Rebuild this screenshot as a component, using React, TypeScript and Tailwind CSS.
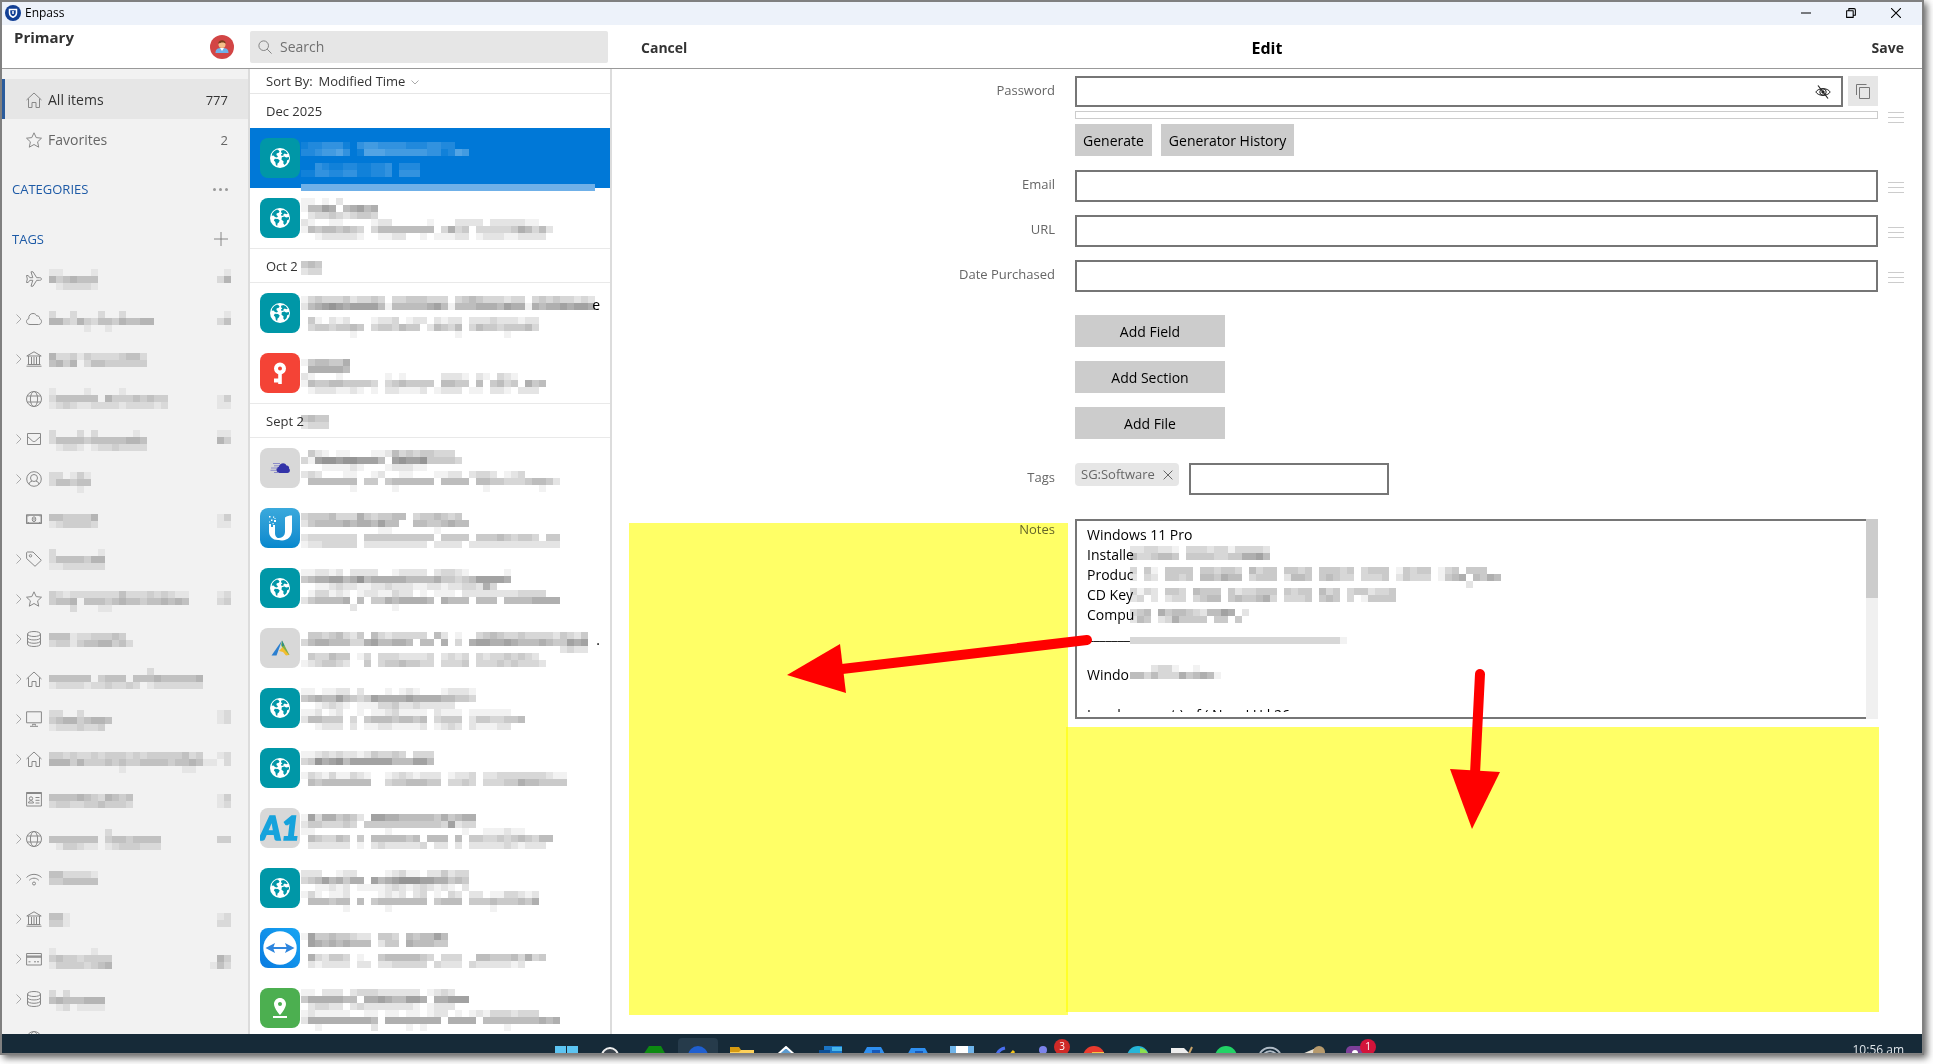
import React from "react";
import { MdPinDrop } from "react-icons/md";

type Block = [row: number, col: number, cells: string[]];

/* A redaction layer: every digit is one 7px cell, its value the darkness. */
function Mosaic({ blocks, step = 0.052, fill = "#000" }: { blocks: Block[]; step?: number; fill?: string }) {
  return (
    <svg aria-hidden="true" className="block overflow-visible" width="1" height="1" shapeRendering="crispEdges">
      {blocks.map(([row, col, lines]) =>
        lines.map((line, r) =>
          line.split("").map((c, i) =>
            c === "0" || c === "." ? null : (
              <rect
                key={`${row}-${col}-${r}-${i}`}
                x={(col + i) * 7}
                y={(row + r) * 7}
                width="7"
                height="7"
                fill={fill}
                fillOpacity={Number(c) * step}
              />
            )
          )
        )
      )}
    </svg>
  );
}

const tagBlocks: Block[] = [
  [0, 0, ["1100001", "5345444", ".122221"]],
  [0, 24, [".1", "25", ".."]],
  [6, 0, ["200200020020", "553253244354455", ".....1..1"]],
  [6, 24, [".1", "24"]],
  [12, 0, ["52231322223442", "45350244333333"]],
  [17, 0, ["1....1....1", "24444440533343433", "12321122221222212"]],
  [17, 25, [".", "3", "1"]],
  [17, 24, [".", "1", "1"]],
  [23, 0, ["2...2.2.....1.", "24444344444554", ".1221.12232222"]],
  [23, 24, ["11", "53"]],
  [29, 0, ["220131", "244344", "....1"]],
  [35, 0, ["4433335", "1233332"]],
  [35, 24, ["13", "11"]],
  [40, 0, ["2......1", "24444355", "11222222"]],
  [46, 0, ["32122222224222323211", "34450444345443445454", "...2...11"]],
  [46, 24, ["12", "23"]],
  [52, 0, ["44412233343", "233134455342"]],
  [57, 0, ["..............2", "4444440344404445444445", "1222212232232012222222"]],
  [63, 0, ["22..2.", "345534554", "12223223"]],
  [63, 24, ["12", "12"]],
  [69, 0, ["3323223233323233333423", "5553533343433444434454", "..........1........11."]],
  [69, 22, ["..12", "11.2"]],
  [75, 0, ["444454325434", "233223343332"]],
  [75, 24, ["13", "12"]],
  [80, 0, ["........2", "4444444.34434444", ".133211.12333222"]],
  [80, 24, ["..", "33"]],
  [86, 0, ["4422221", "3344444"]],
  [92, 0, ["441", "331"]],
  [92, 24, ["12", "22"]],
  [97, 0, ["1.....1", "343323333", "133332345"]],
  [98, 23, [".53", "142"]],
  [103, 0, ["2.2.....", "45444555", ".12.1111"]],
];

const selectedBlocks: Block[] = [
  [0, 0, ["122333103443333222332200", "223445301555444444331254"]],
  [3, 0, ["00321122112230222", "11332233112230333"]],
];

const listBlocks: Block[] = [
  [8, 0, ["1101.2", "15576056756", ".2334323443"]],
  [11, 0, ["210011000012200000100.2222.2222211", "1545545430355555555.3634.33333465352", "..1222221..1122..1.11122.1222112222"]],
  [17, 0, ["454", "233"]],
  [22, 0, ["134333423343033444333034543332330343433232", "256787677775155555675155566657661656676776"]],
  [25, 0, ["041021200.12230122.2122.2223222122", "034434454.3443544.25435.3544344453", ".......1..............1......1"]],
  [31, 0, ["1455446", "0666665"]],
  [33, 0, ["21000100000.1010000.2221.21.321", "15445544443.3454444.5544.5.4534.645", ".1222112101.221112.1222.11.221.222"]],
  [39, 0, ["4544", "2333"]],
  [44, 0, ["0421011000112534344333", "31788788777507877844443", "...111121...122211"]],
  [47, 0, ["232000110.12001100.1122.23320123", "05555555.44.4555555.5555.554433345542", ".......1.....1............1.......1"]],
  [53, 0, ["34445333643445503445434", "24555565665755.055445655"]],
  [55, 0, ["0000000.00.110000001", "23333333.4444444444.4444.444543443.44", "12233333.222222222.2222.2222222222222"]],
  [61, 0, ["112212022220012222023321000001", "456677568566666555564434577776", ".011232211223222112212233263"]],
  [64, 0, ["0133121.12211322.10111.222222223333", "2455556.5.446566665.6555.555.55556666", ".......2.....1"]],
  [70, 0, ["044345324.53233333.52.1..3454334333324324", "3566555336755665.5506.3.67766765556544767", ".....................................2322"]],
  [73, 0, ["0433544.13.33322223.2323.323343432", "1234432.04.34454433.3334.3334343332"]],
  [78, 0, ["1101122020001012100012221", "4565575434766667666655443", "..12321.11133422322222"]],
  [81, 0, ["112012.01.11231111.2111.111111", "255444.3.455545545.3444.24433445", "..1222.2.112211112.1232.211122"]],
  [87, 0, ["1123232212433430333", "3486785777777555775"]],
  [90, 0, ["1321311321.012321222.1223.223333333211", "0545555555.034455544.3343.333446554444"]],
  [96, 0, ["1736645420776655555464566", "2443334304444444444437233"]],
  [98, 0, ["1100000.00.0100000.000.10.111211", "0543354.4.5555545.555.5.443343454355", ".222222.1.23222223.22.2.22222321222"]],
  [104, 0, ["222001220000123110224233", "345756466075678887766454", "..11212011112321232121.2"]],
  [107, 0, ["1310112.00.1212023.1032.2201133212", "0555455.5.45555555.4555.4445444546", "......1.....1..............1"]],
  [113, 0, ["1744544322.4430545575", "0765656555.2440655544"]],
  [116, 0, ["0632443.10.45555543.3330.5544453634", ".212222.22.2233333.3222.32222212"]],
  [121, 0, ["110222.2333222222.1232", "46666655.667655776066777", ".23322.2322222221.1222"]],
  [124, 0, ["12111110011.110110122.1.1213332333", "26666666665.66666666.6666.55555555656", "..1.......2....1.1...........1"]],
];

const noteBlocks: Block[] = [
  [0, 0, ["22332210333233133332", "53345540444433446675"]],
  [3, 0, ["3.41.4444.443443.5344.4434.44434.3444.14344.134.444", "2.32.4434.554655.3444.2554.45433.3334.24333.1456.5465", "................................................2"]],
  [6, 0, ["3132.443.5444.4233444.4344.534.3442334", "2302.233.3455.4544563.3334.454.3014444"]],
  [9, 0, ["345.64554325576.2", "254.2364444044.4"]],
  [13, 0, ["3333333333333333333333333333331"]],
  [17, 0, ["0002331001", "5535333645651"]],
];

const ln = { fill: "none", stroke: "currentColor", strokeWidth: 1 } as const;
const Svg = ({ children, className = "size-4" }: { children: React.ReactNode; className?: string }) => (
  <svg viewBox="0 0 16 16" className={className} aria-hidden="true" {...ln} strokeLinejoin="round">
    {children}
  </svg>
);

const glyphs: Record<string, React.ReactNode> = {
  home: <path d="M.5 8 8 1l7.500 7M2.500 6.500v9h3.500v-5h4v5h3.500v-9" />,
  star: <path d="m8 .8 2.200 4.800 5.300.600-3.900 3.600 1.100 5.400L8 12.500l-4.700 2.700 1.100-5.400L.5 6.200l5.300-.6z" />,
  plane: <path d="M.5 4.500h1.700l1.600 2.200h3L5 .8h2l3.700 5.900h3c2.400 0 2.400 2.600 0 2.600h-3L7 15.200H5l1.800-5.900h-3l-1.600 2.200H.5L1.300 8z" />,
  cloud: <path d="M4 13.500C1.700 13.500.5 12 .5 10.500S1.600 8 2.800 7.700C2.400 4.500 4.500 2.500 7 2.500c2 0 3 1 3.600 2.300 2-.3 3.200 1.200 3 2.900 1.300.5 1.900 1.600 1.900 2.700 0 1.700-1.200 3.100-3 3.100z" />,
  bank: <path d="M.8 5 8 .8 15.200 5zM2.500 5v8M5.500 6v7M8 6v7M10.500 6v7M13.500 5v8M1.500 13.500h13M.5 15.200h15" />,
  globe: <><circle cx="8" cy="8" r="7.500" /><ellipse cx="8" cy="8" rx="3.600" ry="7.500" /><path d="M1.200 5h13.600M1.200 11h13.600" /></>,
  mail: <path d="M1.500 2.500h13v11h-13zM1.500 5.500 6.500 10c1 .8 2 .8 3 0l5-4.500" />,
  user: <><circle cx="8" cy="8" r="7.300" /><circle cx="8" cy="7" r="3.500" /><path d="M3 13.200c.3-2 1.500-2.700 3-3M13 13.200c-.3-2-1.500-2.700-3-3" /></>,
  cash: <><path strokeWidth="1.400" d="M.7 4h14.600v8.300H.7z" /><ellipse cx="8" cy="8.200" rx="1.800" ry="2.400" /><path d="M8 7v2.400M2 5.500l.8-.8M14 5.500l-.8-.8M2 11l.8.800M14 11l-.8.800" /></>,
  tag: <><path d="M.6 1.500 1.200 1H7l8.300 8.300-6.300 6L.6 7.500z" /><circle cx="4.500" cy="4.800" r="1.200" /></>,
  db: <><ellipse cx="8" cy="3" rx="6.500" ry="2.500" /><path d="M1.500 3v10c0 3.300 13 3.300 13 0V3M1.500 6.500c0 3.300 13 3.300 13 0M1.500 9.800c0 3.300 13 3.300 13 0" /></>,
  monitor: <path d="M.6.8h14.800v11H.6zM6.500 14.500v-1.200h3v1.200M4 15.300h8" />,
  id: <><path d="M.6 1.500h14.800v13.500H.6z" /><path strokeWidth="2" d="M.6 2h14.800" /><circle cx="5" cy="7.500" r="1.700" /><path d="M2.500 12c0-3 5-3 5 0zM9.500 6.500h4M9.500 9.300h4M9.500 12h4" /></>,
  wifi: <><path d="M.5 6.500C4.500 2.300 11.500 2.300 15.500 6.500M3.200 9.300c2.600-2.800 7-2.800 9.600 0" /><circle cx="8" cy="12.500" r="1.500" /></>,
  card: <><path d="M.6 2.500h14.800v11.500H.6zM.6 5h14.800" /><path strokeWidth="1.500" d="M.6 6h14.800" /><path d="M2.500 10.800h2M8 10.800h2M11 10.800h2" /></>,
};

const tags: [string, boolean][] = [
  ["plane", false], ["cloud", true], ["bank", true], ["globe", false], ["mail", true],
  ["user", true], ["cash", false], ["tag", true], ["star", true], ["db", true],
  ["home", true], ["monitor", true], ["home", true], ["id", false], ["globe", true],
  ["wifi", true], ["bank", true], ["card", true], ["db", true], ["globe", false],
];

function Sidebar() {
  return (
    <nav aria-label="Vault" className="relative w-[248px] shrink-0 overflow-hidden border-r-2 border-[#dcdcdc] bg-[#f2f2f2] pt-2.5 text-sm">
      <button className="flex h-10 w-full items-center border-l-[3px] border-[#2b5c9c] bg-[#e6e6e6] pt-0.5 pr-5 pl-[21px] text-[#333]">
        <Svg className="size-4 text-[#888]">{glyphs.home}</Svg>
        <span className="ml-1.5 flex-1 text-left">All items</span>
        <span className="text-[13px]">777</span>
      </button>
      <button className="flex h-10 w-full items-center border-l-[3px] border-transparent pt-0.5 pr-5 pl-[21px] text-[#666]">
        <Svg className="size-4 text-[#888]">{glyphs.star}</Svg>
        <span className="ml-1.5 flex-1 text-left">Favorites</span>
        <span className="text-[13px]">2</span>
      </button>
      <div className="mt-2.5 flex h-10 items-center justify-between pr-5 pl-2.5">
        <h2 className="text-[13px] text-[#1d5aa6]">CATEGORIES</h2>
        <button aria-label="More categories" className="flex gap-[3px]">
          <i className="size-[3px] rounded-full bg-[#999]" />
          <i className="size-[3px] rounded-full bg-[#999]" />
          <i className="size-[3px] rounded-full bg-[#999]" />
        </button>
      </div>
      <div className="mt-2.5 flex h-10 items-center justify-between pr-5 pl-2.5">
        <h2 className="text-[13px] text-[#1d5aa6]">TAGS</h2>
        <button aria-label="Add tag" className="text-[#777]">
          <Svg className="size-3.5"><path d="M8 0v16M0 8h16" /></Svg>
        </button>
      </div>
      <ul className="relative text-[#888]">
        {tags.map(([name, open], i) => (
          <li key={i}>
            <button aria-label="Hidden tag" className="flex h-10 w-full items-center pl-3.5">
              <svg viewBox="0 0 6 10" className="h-2.5 w-1.5" stroke={open ? "#aaa" : "none"} fill="none">
                <path d="M.5.5 5 5 .5 9.500" />
              </svg>
              <Svg className="ml-1 size-4">{glyphs[name]}</Svg>
            </button>
          </li>
        ))}
        <li aria-hidden="true" className="absolute top-2.5 left-[47px]"><Mosaic blocks={tagBlocks} step={0.05} /></li>
      </ul>
    </nav>
  );
}

const Earth = () => (
  <svg viewBox="0 0 20 20" className="size-5">
    <circle cx="10" cy="10" r="10" fill="#fff" />
    <g fill="#0097a7">
      <path d="M2.200 5.500C3.500 3.500 5 2.200 7 1.500l1.600.7 1 1.500-1.200 1.200-1.600.4-.4 1.600L8 8.200l-1 1.300-2-.6-1.500-1.500-1.800.4z" />
      <path d="m4.800 10.800 3.200.3 1.700 1.500-.9 2-1.300 1-.3 2.400-1.300-.9-.6-3-1.500-1.700z" />
      <path d="m11 2.800 2.300-.9 2.400 1.200 2.100 2.700-1.600.4-1.300-.7-1.500.8.4 1-2.100.6-.8-1.300 1.500-1-1.200-1z" />
      <path d="m11.800 9.300 2.600-.8 1.700 1 2.800-.5.2 2.200-1.900 1-.6 2.700-2 2.100-1.300-1.600.2-2.200-2-1.500z" />
    </g>
  </svg>
);

function Logo({ kind }: { kind: string }) {
  const box = "flex size-10 shrink-0 items-center justify-center overflow-hidden rounded-lg";
  if (kind === "key")
    return (
      <span className={`${box} bg-[#f44336]`}>
        <svg viewBox="0 0 40 40" className="size-10" fill="none" stroke="#fff">
          <circle cx="20" cy="15.500" r="4" strokeWidth="4" />
          <path strokeWidth="3.600" d="M20 19v12" />
          <path strokeWidth="4" d="M14 27.500h5" />
        </svg>
      </span>
    );
  if (kind === "cloud")
    return (
      <span className={`${box} bg-[#d8d8d8]`}>
        <svg viewBox="0 0 40 40" className="size-10">
          <path fill="#3333a8" d="M19.500 25c-4-.5-4-5.500-.7-6.200C19.500 15 25 14 26.500 17.500c2 0 3 1.500 2.500 3 1.800 1.500.8 4.500-1.500 4.500z" />
          <path stroke="#7777c4" strokeWidth=".8" d="M13 15.500h7M14 17.800h5M11 20h7M10.500 22.300h6.500M14 24.500h5" />
        </svg>
      </span>
    );
  if (kind === "ubnt")
    return (
      <span className={`${box} bg-linear-to-b from-[#3aa9dc] to-[#0588cd]`}>
        <svg viewBox="0 0 40 40" className="size-10" fill="#fff">
          <path d="M9 16h2v3h2v-2h2v8c0 4 3 6 7 6.500-8 2-13-2-13-8zM25 9.500c2-1.500 4-2 7-2v14c0 7-4 10.500-10 11-3 0-5-1-6.500-2.500 6 .5 9.500-1.500 9.500-6.500z" />
          <path d="M9 8h1.500v1.500H9zM13 8.500h1.200v1.200H13zM11 11.500h1.500V13H11zM14 12h2v2h-2zM9 13.500h1.200v1H9zM12.500 15h1.200v1.200h-1.200zM14.500 10h1v1h-1z" />
        </svg>
      </span>
    );
  if (kind === "ads")
    return (
      <span className={`${box} bg-[#d8d8d8]`}>
        <svg viewBox="0 0 40 40" className="size-10">
          <path fill="#7eae4a" d="M22 12.500 29.500 27H26l-5-10z" />
          <path fill="#2b7fd0" d="M22 12.500 16.500 27.500h-5z" />
          <path fill="#2f8f86" d="m22 12.500 2.500 5-2.500 1z" />
          <path fill="#f3bd2e" d="m22.500 19-3.500 4 4 1 3 3.500 3-.5z" />
        </svg>
      </span>
    );
  if (kind === "a1")
    return (
      <span className={`${box} bg-[#d8d8d8]`}>
        <svg viewBox="0 0 40 40" className="size-10">
          <text x="20" y="32" textAnchor="middle" fontFamily="Lato" fontStyle="italic" fontWeight="900" fontSize="32" fill="#17a3dc" stroke="#17a3dc" strokeWidth="1.600">A1</text>
        </svg>
      </span>
    );
  if (kind === "tv")
    return (
      <span className={`${box} bg-linear-to-bl from-[#19a5f2] to-[#0b7be0]`}>
        <svg viewBox="0 0 40 40" className="size-10">
          <circle cx="20" cy="20" r="16.700" fill="#fff" />
          <path fill="#2e86de" d="m5.500 20 9.500-5-1.500 4h13L25 15l9.500 5-9.500 5 1.500-4h-13l1.500 4z" />
        </svg>
      </span>
    );
  if (kind === "pin")
    return <span className={`${box} bg-[#4caf50]`}><MdPinDrop className="size-6 text-white" /></span>;
  return <span className={`${box} bg-[#0097a7]`}><Earth /></span>;
}

const groups: { label: string; items: { kind: string; tail?: string; selected?: boolean }[] }[] = [
  { label: "Dec 2025", items: [{ kind: "web", selected: true }, { kind: "web" }] },
  { label: "Oct 2", items: [{ kind: "web", tail: "e" }, { kind: "key" }] },
  {
    label: "Sept 2",
    items: [
      { kind: "cloud" }, { kind: "ubnt" }, { kind: "web" }, { kind: "ads", tail: "." }, { kind: "web" }, { kind: "web" },
      { kind: "a1" }, { kind: "web" }, { kind: "tv" }, { kind: "pin" },
    ],
  },
];

function ItemList() {
  return (
    <section aria-label="Items" className="relative w-[362px] shrink-0 overflow-hidden border-r-2 border-[#dcdcdc] text-[13px] text-[#333]">
      <button className="flex h-[25px] w-full items-center border-b border-[#e6e6e6] pt-0.5 pl-4">
        <span>Sort By:</span>
        <span className="ml-1.5">Modified Time</span>
        <svg viewBox="0 0 8 5" className="ml-1.5 h-[5px] w-2" fill="none" stroke="#aaa"><path d="m.5.5 3.500 3.500L7.500.5" /></svg>
      </button>
      {groups.map((g, gi) => (
        <div key={g.label}>
          <h3 className={gi === 0 ? "flex h-[34px] items-center pt-0.5 pl-4" : "flex h-[35px] items-center border-y border-[#e9e9e9] pt-0.5 pl-4"}>{g.label}</h3>
          <ul>
            {g.items.map((it, i) => (
              <li key={i}>
                <button
                  aria-label="Hidden item"
                  className={it.selected ? "flex h-[60px] w-full items-center bg-[#0078d7] pl-2.5" : "flex h-[60px] w-full items-center pl-2.5"}
                >
                  <Logo kind={it.kind} />
                  {it.tail && <span className="flex-1 pr-2.5 pb-4 text-right text-sm text-black">{it.tail}</span>}
                </button>
              </li>
            ))}
          </ul>
        </div>
      ))}
      <div aria-hidden="true" className="absolute top-[73px] left-[51px]">
        <Mosaic blocks={selectedBlocks} fill="#fff" step={0.065} />
        <div className="absolute top-[42px] h-[7px] w-[294px] bg-[#6fb0e8]" />
      </div>
      <div aria-hidden="true" className="absolute top-[73px] left-[51px]"><Mosaic blocks={listBlocks} /></div>
    </section>
  );
}

const Handle = () => (
  <button type="button" aria-label="Reorder field" className="flex w-4 flex-col gap-1">
    <i className="h-px bg-[#ccc]" />
    <i className="h-px bg-[#ccc]" />
    <i className="h-px bg-[#ccc]" />
  </button>
);

const field = "block h-8 w-full border-2 border-[#767676] bg-white px-2 outline-none";

function Row({ id, label, children, handle, top }: { id: string; label: string; children: React.ReactNode; handle?: boolean; top?: boolean }) {
  return (
    <div className="flex">
      <label htmlFor={id} className={`${top ? "pt-0" : "pt-1"} w-[443px] shrink-0 text-right text-[13px] leading-5 text-[#666]`}>{label}</label>
      <div className="ml-5 min-w-0 flex-1">{children}</div>
      <div className="ml-2.5 flex w-[34px] shrink-0 items-center pt-0.5">{handle && <Handle />}</div>
    </div>
  );
}

const btn = "flex h-8 items-center justify-center bg-[#ccc] pt-0.5 text-sm text-black";

const notes = "Windows 11 Pro\nInstalle\nProduc\nCD Key\nCompu\n_______\n\nWindo\n\nLocal account ) of ( Now LH l 26";

function Editor() {
  return (
    <main className="relative min-w-0 flex-1 overflow-hidden">
      <form className="pt-[7px]" onSubmit={(e) => e.preventDefault()}>
        <Row id="password" label="Password" handle>
          <div className="flex gap-[5px]">
            <div className="relative flex-1">
              <input id="password" type="password" className="block h-[31px] w-full border-2 border-[#767676] px-2 outline-none" />
              <button type="button" aria-label="Show password" className="absolute top-2 right-3 text-[#222]">
                <Svg className="size-4">
                  <path d="M.8 8C3.500 3.500 12.500 3.500 15.200 8c-2.700 4.500-11.700 4.500-14.400 0z" />
                  <circle cx="8" cy="8" r="3.200" /><circle cx="8" cy="8" r="1.200" fill="currentColor" />
                  <path d="m3 1.500 10 13" strokeWidth="1.200" />
                </Svg>
              </button>
            </div>
            <button type="button" aria-label="Copy" className="flex size-[30px] items-center justify-center bg-[#e6e6e6] text-[#777]">
              <Svg className="size-4"><path d="M4.500 4.500h10v11h-10zM1.500 12V1.500h10" /></Svg>
            </button>
          </div>
          <div className="mt-1 h-2 border border-[#ccc]" />
          <div className="mt-[5px] flex gap-[9px]">
            <button type="button" className={`${btn} px-2`}>Generate</button>
            <button type="button" className={`${btn} px-2`}>Generator History</button>
          </div>
        </Row>
        <div className="mt-3.5 flex flex-col gap-[13px]">
          <Row id="email" label="Email" handle><input id="email" type="email" className={field} /></Row>
          <Row id="url" label="URL" handle><input id="url" type="url" className={field} /></Row>
          <Row id="date" label="Date Purchased" handle><input id="date" type="text" className={field} /></Row>
        </div>
        <div className="mt-[23px] ml-[463px] flex w-[150px] flex-col gap-3.5">
          <button type="button" className={btn}>Add Field</button>
          <button type="button" className={btn}>Add Section</button>
          <button type="button" className={btn}>Add File</button>
        </div>
        <div className="mt-6">
          <Row id="tags" label="Tags">
            <div className="flex items-start gap-2.5">
              <span className="flex h-[23px] items-center gap-2 rounded bg-[#e6e6e6] px-1.5 text-[13px] text-[#666]">
                SG:Software
                <button type="button" aria-label="Remove SG:Software"><Svg className="size-2.5"><path d="m1 1 14 14M15 1 1 15" strokeWidth="1.600" /></Svg></button>
              </span>
              <input id="tags" type="text" className="h-8 w-[200px] border-2 border-[#767676] px-2 outline-none" />
            </div>
          </Row>
        </div>
        <div className="mt-6">
          <Row id="notes" label="Notes" top>
            <div className="relative flex">
              <div className="h-[200px] flex-1 border-y-2 border-l-2 border-[#767676] pt-1 pb-[5px] pl-2.5">
                <textarea id="notes" defaultValue={notes} className="block h-full w-full resize-none overflow-hidden text-sm leading-5 text-black outline-none" />
              </div>
              <div className="w-3 bg-[#f0f0f0]"><div className="h-[79px] bg-[#ccc]" /></div>
              <div aria-hidden="true" className="absolute top-[27px] left-[55px]"><Mosaic blocks={noteBlocks} /></div>
            </div>
          </Row>
        </div>
      </form>
      {/* Highlighter areas and arrows drawn over the form */}
      <div className="absolute top-[454px] left-[17px] h-[492px] w-[439px] bg-[#ffff66] mix-blend-multiply" />
      <div className="absolute top-[658px] right-[43px] left-[454px] h-[285px] bg-[#ffff66] mix-blend-multiply" />
      <svg aria-hidden="true" className="pointer-events-none absolute top-0 left-0 h-full w-full" viewBox="612 69 1310 965" preserveAspectRatio="xMinYMin" fill="#f00" stroke="#f00">
        <path d="M1087 640 842 669" strokeWidth="10" strokeLinecap="round" />
        <path d="m787 675 53-31 6 49z" stroke="none" />
        <path d="m1480 674-5 100" strokeWidth="10" strokeLinecap="round" />
        <path d="m1472 829-22-60 50 3z" stroke="none" />
      </svg>
    </main>
  );
}

const apps: React.ReactNode[] = [
  <path fill="#5cc4f2" d="M1 0h11v11H1zM13 0h11v11H13z" />,
  <circle cx="12" cy="10" r="8" fill="#3b444d" stroke="#eee" strokeWidth="2" />,
  <path fill="#0d8a12" d="M7 0h12l5 9-5 12H7L1 9z" />,
  <circle cx="12" cy="10" r="10" fill="#1f5fd0" />,
  <><path fill="#d69a10" d="M0 1h9l2 3h13v10H0z" /><path fill="#fdd15a" d="M0 6h9l2-2h13v12H0z" /></>,
  <path fill="#5b9bd0" stroke="#fff" strokeWidth="2" d="m12 1 11 10-11 10L1 11z" />,
  <><path fill="#1a74c4" d="M6 0h18v14H6z" /><path fill="#46b5ec" d="M14 1h10v4H14z" /><path fill="#0b4f96" d="M1 4h11v12H1z" /></>,
  <><path fill="#2f8ff0" d="M5 1h14l5 9-5 9H5L0 10z" /><path fill="#1658b8" d="M10 4h8v8h-8z" /></>,
  <><path fill="#2f8ff0" d="M5 2h14l5 9-5 9H5L0 11z" /><path fill="#1658b8" d="M9 5h8v8H9z" /></>,
  <><path fill="#6fb4ea" d="M0 0h24v20H0z" /><path fill="#fff" d="M6 0h12v7H6z" /></>,
  <g fill="none" strokeWidth="3"><path stroke="#4a6ff0" d="M2 12c1-6 4-9 9-10" /><path stroke="#f5c518" d="m14 12 6-7" /></g>,
  <><circle cx="5" cy="4" r="4" fill="#7b83eb" /><path fill="#5059c9" d="M0 9h18v10H0z" /></>,
  <><circle cx="12" cy="11" r="11" fill="#ea3b2e" /><path fill="#f6c445" d="M10 6h12v6H10z" /></>,
  <><circle cx="12" cy="11" r="11" fill="#25b5d8" /><path fill="#8be04e" d="M14 2c5 0 8 4 9 8h-9z" /></>,
  <><path fill="#eee" d="M1 2h13l5 5v9H1z" /><path stroke="#c9a36a" strokeWidth="2" d="m17 12 5-11" /></>,
  <circle cx="12" cy="11" r="11" fill="#22d366" />,
  <g fill="none" stroke="#aeb9c4" strokeWidth="2"><path d="M2 7C7 0 17 0 22 7M5 9c4-5 10-5 14 0" /></g>,
  <><path fill="#e8e2d6" d="m0 8 14-6 2 8H0z" /><circle cx="17" cy="6" r="6" fill="#b79a6c" /></>,
  <><rect y="0" width="20" height="20" rx="5" fill="#7d3f98" /><circle cx="9" cy="7" r="3" fill="#fff" /></>,
];

function Taskbar() {
  return (
    <footer className="relative flex h-[19px] shrink-0 justify-center overflow-hidden bg-[#162a38]">
      {apps.map((a, i) => (
        <button key={i} aria-label="Application" className="relative flex h-12 w-11 shrink-0 items-start justify-center pt-3">
          {i === 3 && <span className="absolute inset-x-0.5 top-1 bottom-0 rounded bg-[#263b4b]" />}
          <svg viewBox="0 0 24 24" className="relative size-6">{a}</svg>
          {i === 11 && <span className="absolute top-[5px] right-0.5 size-4 rounded-full bg-[#cf2a27] text-[10px] leading-[14px] text-white">3</span>}
          {i === 18 && <span className="absolute top-[5px] right-1 size-4 rounded-full bg-[#d3143a] text-[10px] leading-[14px] text-white">1</span>}
        </button>
      ))}
      <time className="absolute top-1.5 right-[18px] text-xs leading-5 text-[#dfe5ea]">10:56 am</time>
    </footer>
  );
}

export default function App() {
  return (
    <div className="h-screen overflow-hidden bg-white pr-[9px] pb-[9px] font-['Open_Sans','Noto_Sans',sans-serif]">
      <div className="flex h-full flex-col border-2 border-[#808080] bg-white shadow-[3px_3px_7px_rgba(0,0,0,0.6)]">
        <div className="flex h-[23px] shrink-0 items-center bg-[#edf2fa] pr-[21px] pb-0.5 pl-[3px] text-xs text-black">
          <svg viewBox="0 0 16 16" className="size-4">
            <circle cx="8" cy="8" r="8" fill="#123f94" />
            <path d="M4.500 4.500h7V8c0 2-1.500 3.500-3.500 4.200C6 11.500 4.500 10 4.500 8z" fill="none" stroke="#fff" strokeWidth="1.500" />
            <path d="M8 6v3" stroke="#fff" strokeWidth="1.500" />
          </svg>
          <span className="ml-1 flex-1">Enpass</span>
          <div className="flex items-center gap-[35px]">
            <button aria-label="Minimize"><Svg className="size-2.5"><path d="M0 8h16" strokeWidth="1.600" /></Svg></button>
            <button aria-label="Restore"><Svg className="size-2.5"><path d="M1 4.500h10.500V15H1zM4.500 4V1H13c1.500 0 2 .5 2 2v8.500h-3" strokeWidth="1.700" /></Svg></button>
            <button aria-label="Close"><Svg className="size-2.5"><path d="m0 0 16 16M16 0 0 16" strokeWidth="1.700" /></Svg></button>
          </div>
        </div>
        <header className="flex h-11 shrink-0 items-center border-b border-[#999]">
          <div className="flex w-[248px] shrink-0 items-center justify-between pr-4 pl-3">
            <button className="pb-5 text-[15px] leading-5 font-bold text-[#333]">Primary</button>
            <button aria-label="Vault icon">
              <svg viewBox="0 0 24 24" className="size-6">
                <circle cx="12" cy="12" r="12" fill="#d24545" />
                <path fill="#6fb1ea" d="M5.500 18c0-4 2-5 6.500-5s6.500 1 6.500 5z" />
                <path fill="#fff" d="M10 13h4l-2 3z" />
                <circle cx="12" cy="9.500" r="3.500" fill="#f4c08a" />
                <path fill="#7a3f1d" d="M8.300 9c-.5-5 8-5 7.400 0-1-2-5-2-7.400 0z" />
              </svg>
            </button>
          </div>
          <label className="flex h-8 w-[358px] shrink-0 items-center rounded-xs bg-[#e6e6e6] pl-2">
            <Svg className="size-3.5 text-[#777]"><circle cx="6.500" cy="6.500" r="5.500" /><path d="m10.500 10.500 5 5" /></Svg>
            <input type="search" aria-label="Search" placeholder="Search" className="ml-2 min-w-0 flex-1 bg-transparent text-sm outline-none placeholder:text-[#707070]" />
          </label>
          <div className="grid flex-1 grid-cols-[1fr_auto_1fr] items-center pt-0.5 pl-1">
            <button className="ml-[29px] justify-self-start text-sm font-bold text-[#333]">Cancel</button>
            <h1 className="text-base font-bold text-black">Edit</h1>
            <button className="mr-[18px] justify-self-end text-sm font-bold text-[#333]">Save</button>
          </div>
        </header>
        <div className="flex min-h-0 flex-1">
          <Sidebar />
          <ItemList />
          <Editor />
        </div>
        <Taskbar />
      </div>
    </div>
  );
}
